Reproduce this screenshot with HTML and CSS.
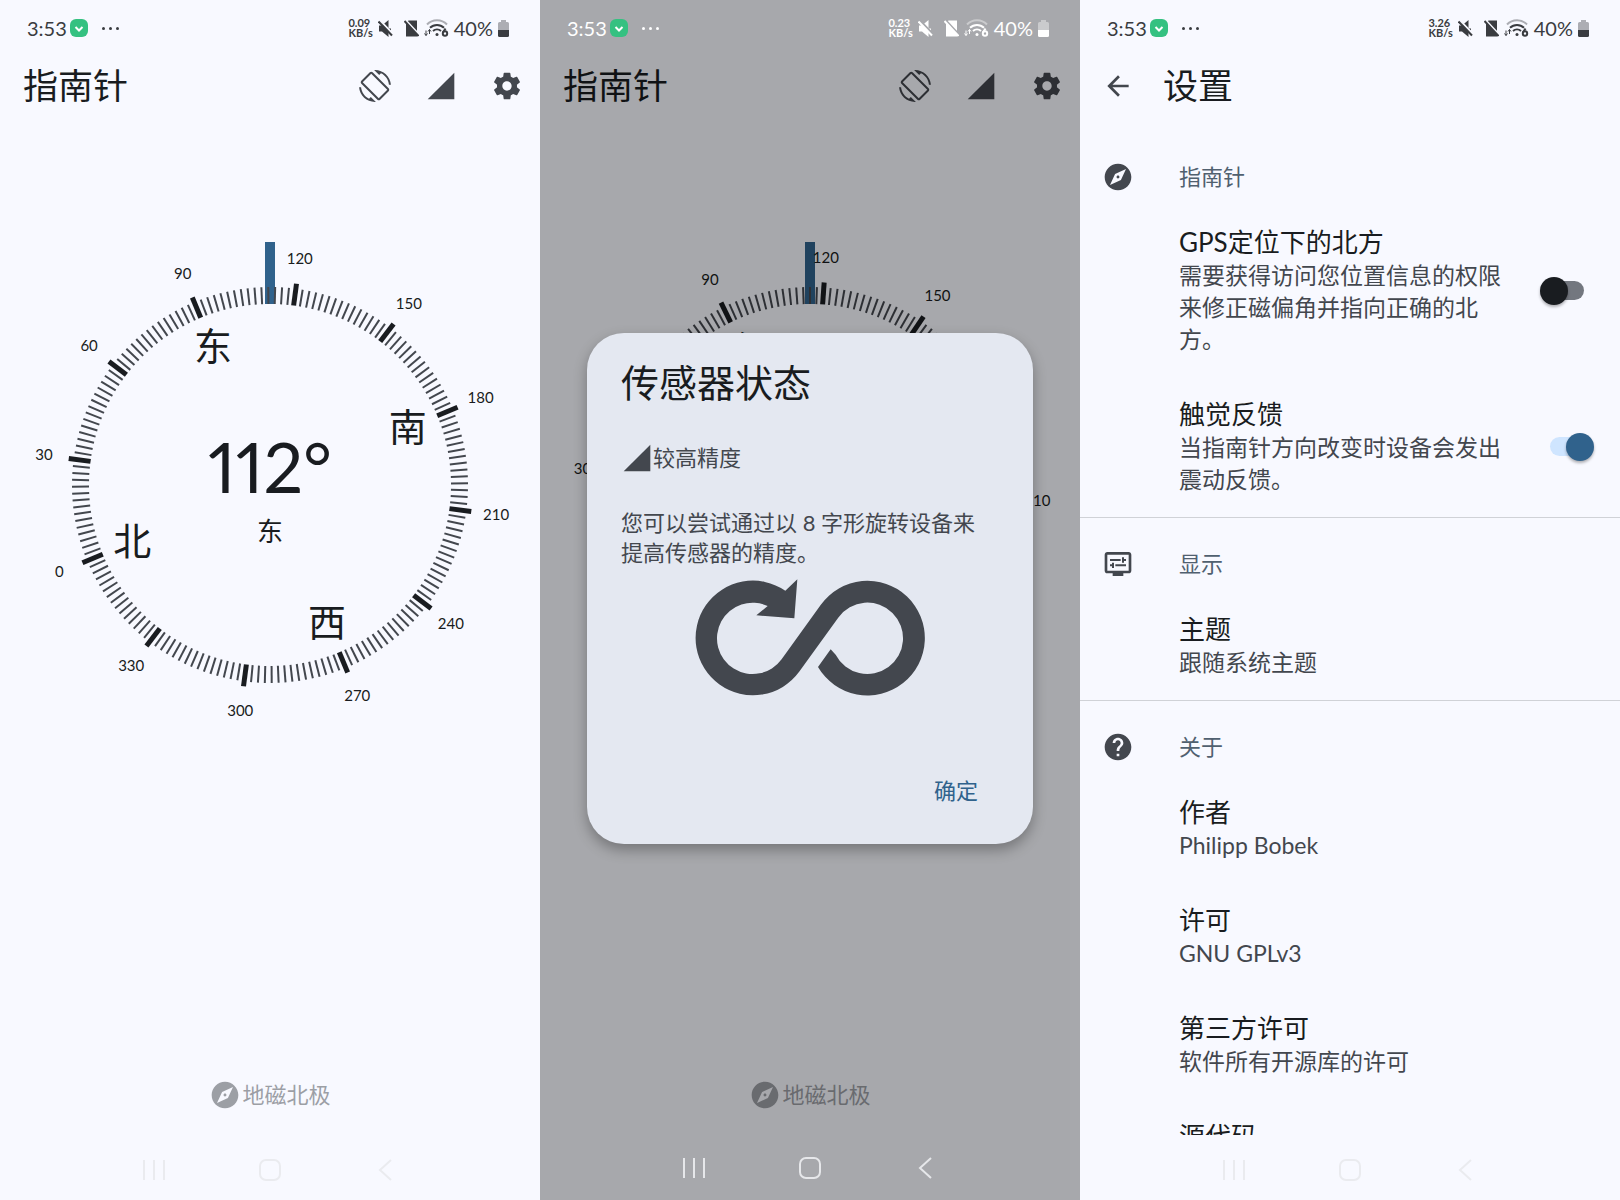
FILE: index.html
```html
<!DOCTYPE html>
<html lang="zh-CN">

<head>
    <meta charset="UTF-8">
    <meta name="viewport" content="width=device-width, initial-scale=1.0">
    <title>指南针</title>
    <link rel="stylesheet" href="styles.css">
    <script src="script.js" defer></script>
</head>

<body>
    <!-- 公用图标 -->
    <svg class="sprite" aria-hidden="true">
        <symbol id="i-mute" viewBox="0 0 15 17">
            <path d="M1 5.500h3L10.500 0v17L4 11.500H1z" />
            <path d="M10 8.500h3v2h-3z" />
            <path class="cut" d="M1.500 0L15 14" />
            <path class="line" d="M0.500 1.500L14 15.500" />
        </symbol>
        <symbol id="i-nosim" viewBox="0 0 15 17">
            <path d="M4.500 0.500h8.500v16H2V3z" />
            <path class="cut" d="M1.500 0l14 15" />
            <path class="line" d="M0.500 1l14 15" />
        </symbol>
        <symbol id="i-wifi" viewBox="0 0 25 18">
            <path class="arc faint" d="M3 5.500a14 14 0 0 1 20 0" />
            <path class="arc" d="M6 8.800a10 10 0 0 1 14 0" />
            <path class="arc" d="M9 12a6 6 0 0 1 8 0" />
            <circle cx="13" cy="15.500" r="1.500" />
            <path class="thin" d="M2 11.500v5M0.500 14.500L2 16.500l1.500-2M5.500 15v-4.500M4 12.500L5.500 10.500 7 12.500" />
            <circle class="six" cx="21" cy="14.500" r="2.200" />
            <path class="six" d="M19 13.500l2.500-4" />
        </symbol>
        <symbol id="i-battery" viewBox="0 0 11 17">
            <path class="faint" d="M3 0h5v2h1.500A1.500 1.500 0 0 1 11 3.500V10H0V3.500A1.500 1.500 0 0 1 1.500 2H3z" />
            <path d="M0 10h11v5.500A1.500 1.500 0 0 1 9.500 17h-8A1.500 1.500 0 0 1 0 15.500z" />
        </symbol>
        <symbol id="i-rotate" viewBox="0 0 24 24">
            <path d="M16.480 2.520c3.270 1.550 5.610 4.720 5.970 8.480h1.500C23.440 4.840 18.290 0 12 0l-.66.03 3.810 3.810 1.330-1.320zm-6.250-.77c-.59-.59-1.540-.59-2.120 0L1.750 8.110c-.59.59-.59 1.540 0 2.120l12.020 12.020c.59.59 1.540.59 2.120 0l6.360-6.360c.59-.59.59-1.540 0-2.120L10.230 1.750zm4.600 19.440L2.810 9.170l6.360-6.360 12.020 12.020-6.360 6.360zm-7.310.29C4.250 19.940 1.910 16.760 1.550 13H.05C.56 19.160 5.710 24 12 24l.66-.03-3.810-3.810-1.330 1.320z" />
        </symbol>
        <symbol id="i-signal" viewBox="0 0 24 24">
            <path d="M2 22h20V2z" />
        </symbol>
        <symbol id="i-gear" viewBox="0 0 24 24">
            <path d="M19.430 12.980c.04-.32.07-.64.07-.98s-.03-.66-.07-.98l2.110-1.650c.19-.15.24-.42.12-.64l-2-3.460c-.12-.22-.39-.3-.61-.22l-2.490 1c-.52-.4-1.080-.73-1.690-.98l-.38-2.650C14.460 2.180 14.250 2 14 2h-4c-.25 0-.46.18-.49.42l-.38 2.650c-.61.25-1.170.59-1.690.98l-2.490-1c-.23-.09-.49 0-.61.22l-2 3.460c-.13.22-.07.49.12.64l2.110 1.650c-.04.32-.07.65-.07.98s.03.66.07.98l-2.110 1.650c-.19.15-.24.42-.12.64l2 3.460c.12.22.39.3.61.22l2.490-1c.52.4 1.080.73 1.690.98l.38 2.650c.03.24.24.42.49.42h4c.25 0 .46-.18.49-.42l.38-2.650c.61-.25 1.170-.59 1.690-.98l2.490 1c.23.09.49 0 .61-.22l2-3.460c.12-.22.07-.49-.12-.64l-2.110-1.650zM12 15.500c-1.930 0-3.500-1.570-3.500-3.500s1.570-3.500 3.500-3.500 3.500 1.570 3.500 3.500-1.570 3.500-3.500 3.500z" />
        </symbol>
        <symbol id="i-back" viewBox="0 0 24 24">
            <path d="M20 11H7.830l5.590-5.590L12 4l-8 8 8 8 1.410-1.410L7.830 13H20v-2z" />
        </symbol>
        <symbol id="i-compass" viewBox="0 0 24 24">
            <path d="M12 10.900c-.61 0-1.100.49-1.100 1.100s.49 1.100 1.100 1.100c.61 0 1.100-.49 1.100-1.100s-.49-1.100-1.100-1.100zM12 2C6.480 2 2 6.480 2 12s4.480 10 10 10 10-4.480 10-10S17.520 2 12 2zm2.190 12.190L6 18l3.810-8.190L18 6l-3.810 8.190z" />
        </symbol>
        <symbol id="i-display" viewBox="0 0 24 24">
            <path d="M20 3H4c-1.100 0-2 .9-2 2v12c0 1.100.9 2 2 2h4v2h8v-2h4c1.100 0 2-.9 2-2V5c0-1.100-.9-2-2-2zm0 14H4V5h16v12zM6 8.250h8v1.500H6zM16.500 9.750H18v-1.500h-1.500V7H15v4h1.500zM10 12.250h8v1.500h-8zM7.500 15H9v-4H7.500v1.250H6v1.500h1.500z" />
        </symbol>
        <symbol id="i-help" viewBox="0 0 24 24">
            <path d="M12 2C6.480 2 2 6.480 2 12s4.480 10 10 10 10-4.480 10-10S17.520 2 12 2zm1 17h-2v-2h2v2zm2.070-7.750l-.9.920C13.450 12.900 13 13.500 13 15h-2v-.5c0-1.100.45-2.100 1.170-2.830l1.240-1.260c.37-.36.59-.86.59-1.410 0-1.100-.9-2-2-2s-2 .9-2 2H8c0-2.210 1.790-4 4-4s4 1.790 4 4c0 .88-.36 1.680-.93 2.250z" />
        </symbol>
        <symbol id="i-recents" viewBox="0 0 24 24">
            <path d="M2 2v20M12 2v20M22 2v20" />
        </symbol>
        <symbol id="i-home" viewBox="0 0 24 24">
            <rect x="2" y="2" width="20" height="20" rx="6" />
        </symbol>
        <symbol id="i-prev" viewBox="0 0 24 24">
            <path d="M17 2L6 12l11 10" />
        </symbol>
    </svg>

    <div class="screens">
        <!-- 指南针 -->
        <section class="screen">
            <div class="status_bar">
                <span class="clock">3:53</span>
                <svg class="badge" viewBox="0 0 18 18"><rect width="18" height="18" rx="6" /><path d="M5.500 8l3.500 3.500L12.500 8" /></svg>
                <span class="more"><i></i><i></i><i></i></span>
                <span class="rate">0.09<br>KB/s</span>
                <svg class="st_icon"><use href="#i-mute" /></svg>
                <svg class="st_icon sim"><use href="#i-nosim" /></svg>
                <svg class="st_icon wifi"><use href="#i-wifi" /></svg>
                <span class="percent">40%</span>
                <svg class="st_icon battery"><use href="#i-battery" /></svg>
            </div>
            <header class="app_bar">
                <h1>指南针</h1>
                <button class="icon_btn" aria-label="旋转"><svg class="icon"><use href="#i-rotate" /></svg></button>
                <button class="icon_btn" aria-label="传感器状态"><svg class="icon"><use href="#i-signal" /></svg></button>
                <button class="icon_btn" aria-label="设置"><svg class="icon"><use href="#i-gear" /></svg></button>
            </header>
            <main class="compass_area">
                <svg class="compass" viewBox="-270 -250 540 500" data-heading="112.5"></svg>
                <p class="north"><svg class="icon"><use href="#i-compass" /></svg>地磁北极</p>
            </main>
            <nav class="nav_bar">
                <button aria-label="最近"><svg><use href="#i-recents" /></svg></button>
                <button aria-label="主页"><svg><use href="#i-home" /></svg></button>
                <button aria-label="返回"><svg><use href="#i-prev" /></svg></button>
            </nav>
        </section>

        <!-- 传感器状态 -->
        <section class="screen dimmed">
            <div class="status_bar">
                <span class="clock">3:53</span>
                <svg class="badge" viewBox="0 0 18 18"><rect width="18" height="18" rx="6" /><path d="M5.500 8l3.500 3.500L12.500 8" /></svg>
                <span class="more"><i></i><i></i><i></i></span>
                <span class="rate">0.23<br>KB/s</span>
                <svg class="st_icon"><use href="#i-mute" /></svg>
                <svg class="st_icon sim"><use href="#i-nosim" /></svg>
                <svg class="st_icon wifi"><use href="#i-wifi" /></svg>
                <span class="percent">40%</span>
                <svg class="st_icon battery"><use href="#i-battery" /></svg>
            </div>
            <header class="app_bar">
                <h1>指南针</h1>
                <button class="icon_btn" aria-label="旋转"><svg class="icon"><use href="#i-rotate" /></svg></button>
                <button class="icon_btn" aria-label="传感器状态"><svg class="icon"><use href="#i-signal" /></svg></button>
                <button class="icon_btn" aria-label="设置"><svg class="icon"><use href="#i-gear" /></svg></button>
            </header>
            <main class="compass_area">
                <svg class="compass" viewBox="-270 -250 540 500" data-heading="116"></svg>
                <p class="north"><svg class="icon"><use href="#i-compass" /></svg>地磁北极</p>
            </main>
            <nav class="nav_bar">
                <button aria-label="最近"><svg><use href="#i-recents" /></svg></button>
                <button aria-label="主页"><svg><use href="#i-home" /></svg></button>
                <button aria-label="返回"><svg><use href="#i-prev" /></svg></button>
            </nav>
            <div class="scrim">
                <div class="dialog" role="dialog" aria-labelledby="dialog-title">
                    <h2 id="dialog-title">传感器状态</h2>
                    <p class="accuracy"><svg class="icon"><use href="#i-signal" /></svg>较高精度</p>
                    <p class="message">您可以尝试通过以 8 字形旋转设备来提高传感器的精度。</p>
                    <svg class="figure8" viewBox="345 236 690 351">
                        <path d="M652 237L643 354L529 345L563 317A107 107 0 1 0 604.800 476.600L722.500 313.400A172 172 0 1 1 714 500L752 447L767 463A107 107 0 1 0 775.200 351.400L657.500 514.600A172 172 0 1 1 616 271Z" />
                    </svg>
                    <button class="ok">确定</button>
                </div>
            </div>
        </section>

        <!-- 设置 -->
        <section class="screen">
            <div class="status_bar">
                <span class="clock">3:53</span>
                <svg class="badge" viewBox="0 0 18 18"><rect width="18" height="18" rx="6" /><path d="M5.500 8l3.500 3.500L12.500 8" /></svg>
                <span class="more"><i></i><i></i><i></i></span>
                <span class="rate">3.26<br>KB/s</span>
                <svg class="st_icon"><use href="#i-mute" /></svg>
                <svg class="st_icon sim"><use href="#i-nosim" /></svg>
                <svg class="st_icon wifi"><use href="#i-wifi" /></svg>
                <span class="percent">40%</span>
                <svg class="st_icon battery"><use href="#i-battery" /></svg>
            </div>
            <header class="app_bar settings_bar">
                <button class="icon_btn" aria-label="返回"><svg class="icon"><use href="#i-back" /></svg></button>
                <h1>设置</h1>
            </header>
            <main class="settings">
                <section class="group">
                    <h2><svg class="icon"><use href="#i-compass" /></svg>指南针</h2>
                    <div class="item">
                        <label for="gps"><strong>GPS定位下的北方</strong><span>需要获得访问您位置信息的权限来修正磁偏角并指向正确的北方。</span></label>
                        <input class="switch" type="checkbox" id="gps">
                    </div>
                    <div class="item">
                        <label for="haptic"><strong>触觉反馈</strong><span>当指南针方向改变时设备会发出震动反馈。</span></label>
                        <input class="switch" type="checkbox" id="haptic" checked>
                    </div>
                </section>
                <section class="group">
                    <h2><svg class="icon"><use href="#i-display" /></svg>显示</h2>
                    <a class="item" href="#theme"><strong>主题</strong><span>跟随系统主题</span></a>
                </section>
                <section class="group">
                    <h2><svg class="icon"><use href="#i-help" /></svg>关于</h2>
                    <a class="item" href="#author"><strong>作者</strong><span>Philipp Bobek</span></a>
                    <a class="item" href="#license"><strong>许可</strong><span>GNU GPLv3</span></a>
                    <a class="item" href="#third"><strong>第三方许可</strong><span>软件所有开源库的许可</span></a>
                    <a class="item" href="#source"><strong>源代码</strong></a>
                </section>
            </main>
            <nav class="nav_bar">
                <button aria-label="最近"><svg><use href="#i-recents" /></svg></button>
                <button aria-label="主页"><svg><use href="#i-home" /></svg></button>
                <button aria-label="返回"><svg><use href="#i-prev" /></svg></button>
            </nav>
        </section>
    </div>
</body>

</html>
```
FILE: styles.css
```css
* {
    margin: 0;
    padding: 0;
    box-sizing: border-box;
}

body {
    font-family: Lato, "Noto Sans CJK SC", sans-serif;
    color: #191c20;
    background-color: #f8f9ff;
}

button {
    border: 0;
    background: none;
    font: inherit;
    color: inherit;
}

h1,
h2,
strong {
    font-weight: 400;
}

a {
    color: inherit;
    text-decoration: none;
}

.sprite {
    position: absolute;
    width: 0;
    height: 0;
}

.screens {
    display: grid;
    grid-template-columns: repeat(3, minmax(0, 1fr));
    height: 100vh;
}

.screen {
    position: relative;
    display: flex;
    flex-direction: column;
    min-height: 0;
    overflow: hidden;
    background-color: #f8f9ff;
}

.icon {
    display: block;
    width: 32px;
    height: 32px;
    fill: #43474e;
    flex: none;
}

/* 状态栏 */
.status_bar {
    --bar: #3a3c40;
    --back: #f8f9ff;
    display: flex;
    align-items: center;
    gap: 3px;
    height: 56px;
    padding: 0 31px 0 27px;
    color: var(--bar);
    font-size: 20px;
    flex: none;
}

.badge {
    width: 18px;
    height: 18px;
    fill: #35c181;
}

.badge path {
    fill: none;
    stroke: #fff;
    stroke-width: 2;
}

.more {
    display: flex;
    gap: 4px;
    margin-left: 11px;
}

.more i {
    width: 3px;
    height: 3px;
    border-radius: 50%;
    background-color: var(--bar);
}

.rate {
    margin-left: auto;
    font-size: 11px;
    line-height: 10px;
    font-weight: 700;
}

.st_icon {
    width: 15px;
    height: 17px;
    margin-left: 2px;
    fill: var(--bar);
}

.sim {
    margin-left: 8px;
}

.wifi {
    width: 25px;
    height: 18px;
}

.percent {
    margin-left: 2px;
}

.battery {
    width: 11px;
}

.cut {
    fill: none;
    stroke: var(--back);
    stroke-width: 2;
}

.line,
.thin,
.six,
.arc {
    fill: none;
    stroke: var(--bar);
    stroke-width: 2;
}

.thin {
    stroke-width: 1;
}

.faint {
    opacity: .4;
}

/* 标题栏 */
.app_bar {
    display: flex;
    align-items: center;
    gap: 34px;
    height: 60px;
    padding: 0 17px 0 23px;
    flex: none;
}

.app_bar h1 {
    margin-right: auto;
    padding-bottom: 2px;
    font-size: 35px;
    line-height: 50px;
}

.settings_bar {
    gap: 29px;
    padding-left: 22px;
}

/* 指南针 */
.compass_area {
    flex: 1;
    display: flex;
    flex-direction: column;
    min-height: 0;
    padding: 119px 0 24px;
}

.compass {
    display: block;
    width: 100%;
    font-size: 15px;
}

.compass text {
    fill: #191c20;
    text-anchor: middle;
}

.tick {
    stroke: #43474e;
    stroke-width: 2;
}

.tick_main {
    stroke: #191c20;
    stroke-width: 5;
}

.needle {
    fill: #30628c;
}

.cardinal {
    font-size: 38px;
}

.degree {
    font-size: 70px;
    font-variant-numeric: proportional-nums;
}

.direction {
    font-size: 26px;
}

.north {
    display: flex;
    align-items: center;
    justify-content: center;
    gap: 1px;
    margin-top: auto;
    font-size: 22px;
    line-height: 32px;
    color: #43474e;
    opacity: .5;
}

/* 导航栏 */
.nav_bar {
    display: flex;
    align-items: center;
    justify-content: center;
    gap: 92px;
    height: 65px;
    padding-top: 4px;
    flex: none;
}

.nav_bar svg {
    display: block;
    width: 24px;
    height: 24px;
    fill: none;
    stroke: #eaebef;
    stroke-width: 2;
}

/* 弹窗 */
.dimmed .status_bar,
.dimmed .nav_bar {
    position: relative;
    z-index: 2;
}

.dimmed .status_bar {
    --bar: #fff;
    --back: #a7a8ac;
}

.dimmed .nav_bar {
    padding-top: 0;
}

.dimmed .nav_bar svg {
    stroke: #e6e7ea;
}

.scrim {
    position: absolute;
    inset: 0;
    z-index: 1;
    display: flex;
    align-items: center;
    padding: 0 47px 24px;
    background-color: rgba(0, 0, 0, .325);
}

.dialog {
    display: flex;
    flex-direction: column;
    width: 100%;
    padding: 24px 34px 37px;
    border-radius: 37px;
    background-color: #e4e8f1;
    box-shadow: 0 6px 14px rgba(0, 0, 0, .3);
    color: #43474e;
    font-size: 22px;
}

.dialog h2 {
    font-size: 38px;
    line-height: 50px;
    color: #191c20;
}

.accuracy {
    display: flex;
    align-items: center;
    margin: 35px 0 34px;
    line-height: 32px;
}

.message {
    padding-right: 14px;
    line-height: 30px;
}

.figure8 {
    width: 230px;
    height: 117px;
    margin: 11px auto 79px;
    fill: #43474e;
}

.ok {
    align-self: flex-end;
    padding: 0 21px;
    line-height: 32px;
    color: #30628c;
}

/* 设置 */
.settings {
    flex: 1;
    min-height: 0;
    padding-top: 15px;
    overflow: hidden;
}

.group + .group {
    border-top: 1px solid #d0d2d7;
}

.group h2 {
    display: flex;
    align-items: center;
    gap: 45px;
    padding: 30px 22px 12px;
    font-size: 22px;
    line-height: 32px;
    color: #50606f;
}

.item {
    display: flex;
    flex-direction: column;
    padding: 21px 26px 22px 99px;
    font-size: 23px;
    line-height: 32px;
    color: #43474e;
}

div.item {
    flex-direction: row;
    align-items: center;
    gap: 32px;
}

.item label {
    flex: 1;
}

.item strong {
    display: block;
    font-size: 26px;
    line-height: 33px;
    color: #191c20;
}

.item span {
    display: block;
}

.switch {
    appearance: none;
    display: flex;
    align-items: center;
    width: 34px;
    height: 19px;
    margin: 0 10px;
    border-radius: 10px;
    background-color: #73777f;
    flex: none;
}

.switch::before {
    content: "";
    width: 28px;
    height: 28px;
    margin: 0 -10px;
    border-radius: 50%;
    background-color: #191c20;
    box-shadow: 0 2px 3px rgba(0, 0, 0, .3);
    flex: none;
}

.switch:checked {
    justify-content: flex-end;
    background-color: #cfe5ff;
}

.switch:checked::before {
    background-color: #30628c;
}
```
FILE: script.js
```js
const NS = 'http://www.w3.org/2000/svg';

function add(svg, name, attrs, text) {
    const el = document.createElementNS(NS, name);
    for (const key in attrs) {
        el.setAttribute(key, attrs[key]);
    }
    if (text) el.textContent = text;
    svg.appendChild(el);
}

//各角度对应的坐标
function point(deg, r) {
    const rad = deg * Math.PI / 180;
    return [r * Math.sin(rad), -r * Math.cos(rad)];
}

const cardinals = { 0: '北', 90: '东', 180: '南', 270: '西' };

document.querySelectorAll('.compass').forEach(svg => {
    const heading = Number(svg.dataset.heading);

    add(svg, 'rect', { class: 'needle', x: -5, y: -243, width: 10, height: 62 });

    for (let deg = 0; deg < 360; deg += 2) {
        const main = deg % 30 === 0;
        const [x1, y1] = point(deg - heading, 181);
        const [x2, y2] = point(deg - heading, main ? 203 : 198);
        add(svg, 'line', { class: main ? 'tick_main' : 'tick', x1, y1, x2, y2 });

        if (main) {
            const [x, y] = point(deg - heading, 228);
            add(svg, 'text', { x, y: y + 5 }, String(deg));
        }
        if (cardinals[deg]) {
            const [x, y] = point(deg - heading, 149);
            add(svg, 'text', { class: 'cardinal', x, y: y + 13 }, cardinals[deg]);
        }
    }

    add(svg, 'text', { class: 'degree', x: 0, y: 8 }, Math.floor(heading) + '°');
    add(svg, 'text', { class: 'direction', x: 0, y: 56 }, '东');
});
```
